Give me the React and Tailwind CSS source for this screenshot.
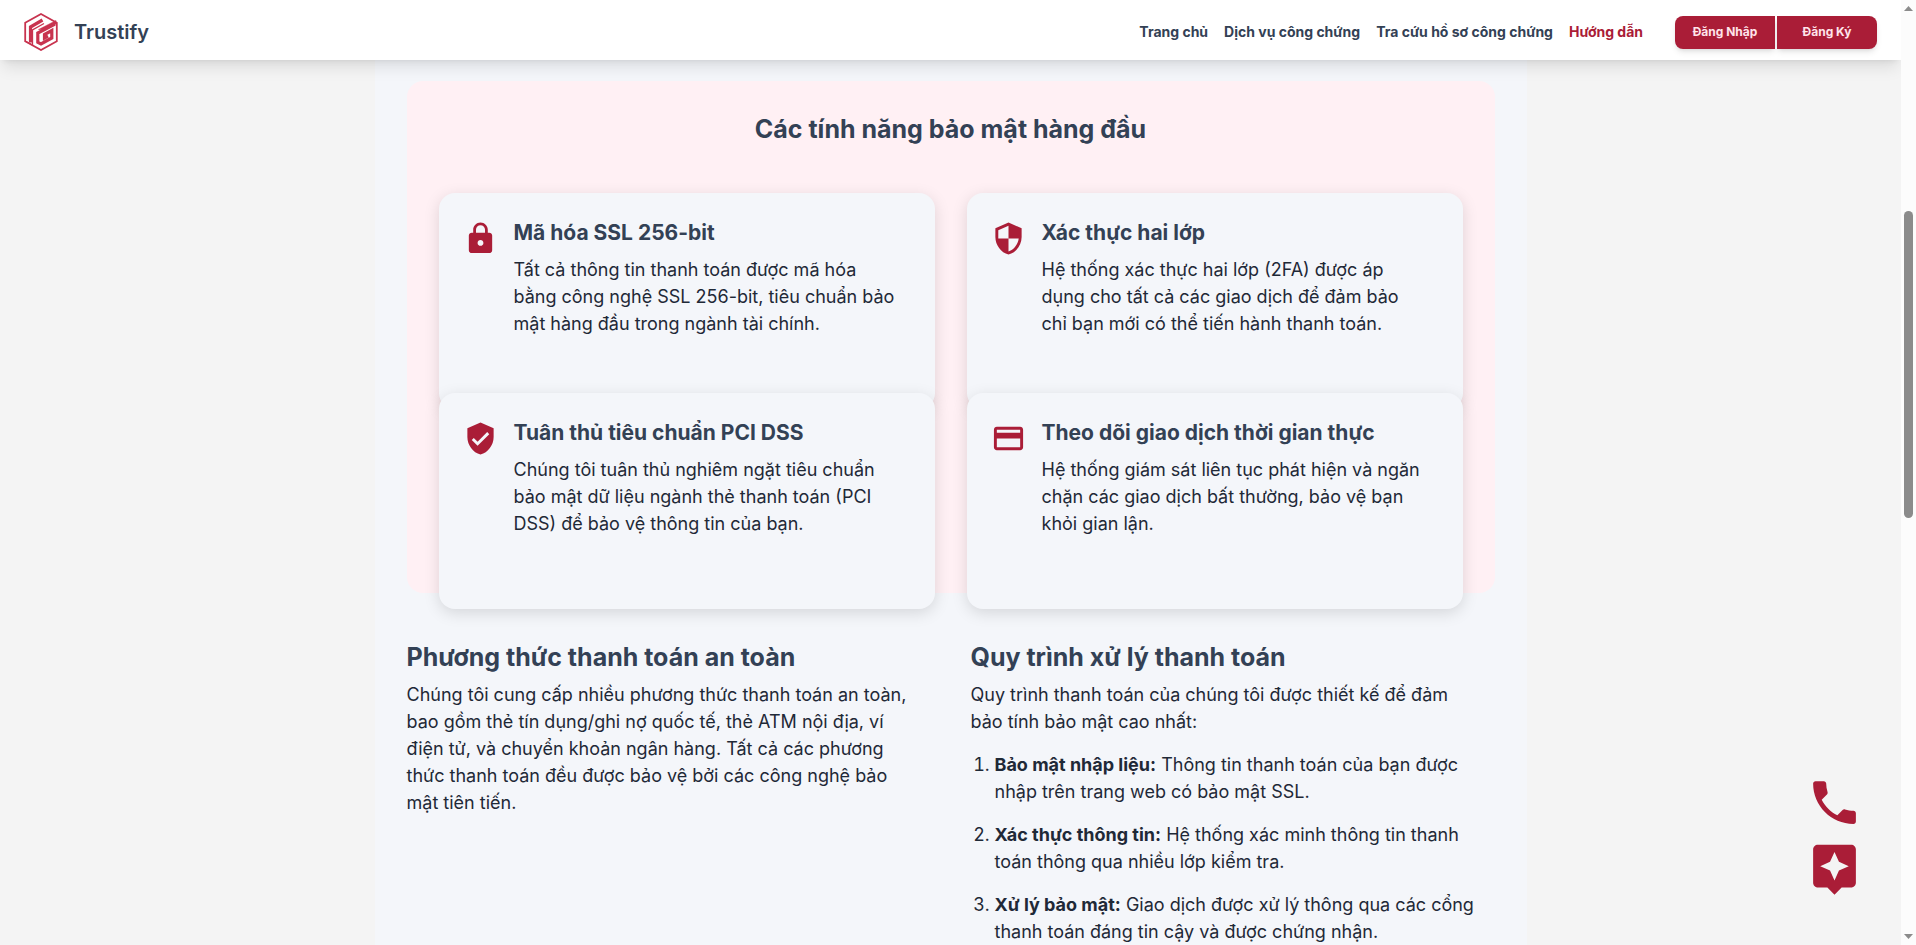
import { Fragment } from "react";
import { MdLock, MdSecurity, MdVerifiedUser, MdPayment, MdPhone, MdAssistant } from "react-icons/md";

const NAV = ["Trang chủ", "Dịch vụ công chứng", "Tra cứu hồ sơ công chứng", "Hướng dẫn"];

const FEATURES = [
  { Icon: MdLock, title: "Mã hóa SSL 256-bit", lines: ["Tất cả thông tin thanh toán được mã hóa", "bằng công nghệ SSL 256-bit, tiêu chuẩn bảo", "mật hàng đầu trong ngành tài chính."] },
  { Icon: MdSecurity, title: "Xác thực hai lớp", lines: ["Hệ thống xác thực hai lớp (2FA) được áp", "dụng cho tất cả các giao dịch để đảm bảo", "chỉ bạn mới có thể tiến hành thanh toán."] },
  { Icon: MdVerifiedUser, title: "Tuân thủ tiêu chuẩn PCI DSS", lines: ["Chúng tôi tuân thủ nghiêm ngặt tiêu chuẩn", "bảo mật dữ liệu ngành thẻ thanh toán (PCI", "DSS) để bảo vệ thông tin của bạn."] },
  { Icon: MdPayment, title: "Theo dõi giao dịch thời gian thực", lines: ["Hệ thống giám sát liên tục phát hiện và ngăn", "chặn các giao dịch bất thường, bảo vệ bạn", "khỏi gian lận."] },
];

const METHODS = [
  "Chúng tôi cung cấp nhiều phương thức thanh toán an toàn,",
  "bao gồm thẻ tín dụng/ghi nợ quốc tế, thẻ ATM nội địa, ví",
  "điện tử, và chuyển khoản ngân hàng. Tất cả các phương",
  "thức thanh toán đều được bảo vệ bởi các công nghệ bảo",
  "mật tiên tiến.",
];

const PROCESS = ["Quy trình thanh toán của chúng tôi được thiết kế để đảm", "bảo tính bảo mật cao nhất:"];

const STEPS = [
  { name: "Bảo mật nhập liệu:", lines: ["Thông tin thanh toán của bạn được", "nhập trên trang web có bảo mật SSL."] },
  { name: "Xác thực thông tin:", lines: ["Hệ thống xác minh thông tin thanh", "toán thông qua nhiều lớp kiểm tra."] },
  { name: "Xử lý bảo mật:", lines: ["Giao dịch được xử lý thông qua các cổng", "thanh toán đáng tin cậy và được chứng nhận."] },
];

function Lines({ lines }) {
  return lines.map((line, i) => (
    <Fragment key={line}>
      {i > 0 && <br />}
      {line}
    </Fragment>
  ));
}

function Logo() {
  return (
    <svg viewBox="0 0 34 38" className="h-[38px] w-[34px] text-[#c8334f]" fill="none" stroke="currentColor" aria-hidden="true">
      <path d="M17 1 32.800 9.800V28.200L17 37 1.200 28.200V9.800Z" strokeWidth="1.800" />
      <path d="M1 28 8.500 32V17L20 10.500" strokeWidth="1.300" />
      <path d="M6.500 29.500V14L18.500 7" strokeWidth="3.200" />
      <path d="M14.500 16.500 32 7.500V11L21 17Z" fill="currentColor" strokeWidth="0.500" />
      <path d="M31 11 13.800 20V29.300L17 31 27.800 25V17.500L20.500 21.500V25L24 23" strokeWidth="3.200" />
    </svg>
  );
}

function Header() {
  return (
    <header className="z-10 flex h-[60px] shrink-0 items-center justify-between bg-white px-6 pt-1 shadow-lg">
      <a href="#" className="flex items-center gap-4 text-xl font-semibold text-[#334155]">
        <Logo />
        Trustify
      </a>
      <div className="flex items-center gap-8">
        <nav className="flex gap-4 text-sm font-bold text-[#334155]">
          {NAV.map((item, i) => (
            <a key={item} href="#" className={i === 3 ? "text-[#aa1d37]" : ""}>{item}</a>
          ))}
        </nav>
        <div className="flex gap-0.5 text-xs font-bold text-[#ffe4ea]">
          <button type="button" className="h-[33px] w-[100px] rounded-l-lg bg-[#aa1d37] shadow-md">Đăng Nhập</button>
          <button type="button" className="h-[33px] w-[100px] rounded-r-lg bg-[#aa1d37] shadow-md">Đăng Ký</button>
        </div>
      </div>
    </header>
  );
}

function FeatureCard({ Icon, title, lines }) {
  return (
    <article className="flex h-[216px] gap-4 rounded-2xl bg-[#f4f6fa] p-6 shadow-[0_4px_16px_rgba(0,0,0,0.13)]">
      <Icon className="mt-1 size-[35px] shrink-0 text-[#aa1d37]" />
      <div className="min-w-0 pt-px">
        <h3 className="mb-2 text-[21px] leading-[30px] font-bold text-[#334155]">{title}</h3>
        <p><Lines lines={lines} /></p>
      </div>
    </article>
  );
}

function Scrollbar() {
  return (
    <div className="flex w-[15px] shrink-0 flex-col items-center bg-[#fcfcfc] text-[#8b8b8b]" aria-hidden="true">
      <svg viewBox="0 0 15 15" className="size-[15px]" fill="currentColor"><path d="M3 11 7.500 6 12 11Z" /></svg>
      <div className="h-[196px]" />
      <div className="h-[307px] w-[9px] rounded-full bg-[#8b8b8b]" />
      <div className="flex-1" />
      <svg viewBox="0 0 15 15" className="size-[15px]" fill="currentColor"><path d="M3 4 7.500 9 12 4Z" /></svg>
    </div>
  );
}

export default function App() {
  return (
    <div className="flex h-screen bg-[#f4f4f4] font-['Inter','Noto_Sans',sans-serif] text-lg leading-[27px] text-[#1f2937]">
      <div className="relative flex min-w-0 flex-1 flex-col overflow-hidden">
        <Header />
        <main className="mx-auto min-h-0 w-full max-w-6xl flex-1 bg-[#f4f6fa] px-8 pt-[21px]">
          <section className="mb-12 h-[512px] rounded-2xl bg-[#fff0f4] p-8">
            <h2 className="mb-12 text-center text-[25px] leading-8 font-bold text-[#334155]">Các tính năng bảo mật hàng đầu</h2>
            <div className="grid auto-rows-[200px] grid-cols-2 gap-x-8">
              {FEATURES.map((f) => <FeatureCard key={f.title} {...f} />)}
            </div>
          </section>
          <div className="grid grid-cols-2 gap-10">
            <section>
              <h2 className="mb-2 text-[25px] leading-8 font-bold text-[#334155]">Phương thức thanh toán an toàn</h2>
              <p><Lines lines={METHODS} /></p>
            </section>
            <section>
              <h2 className="mb-2 text-[25px] leading-8 font-bold text-[#334155]">Quy trình xử lý thanh toán</h2>
              <p className="mb-4"><Lines lines={PROCESS} /></p>
              <ol className="flex list-decimal flex-col gap-4 pl-6">
                {STEPS.map((s) => (
                  <li key={s.name}><strong>{s.name}</strong> <Lines lines={s.lines} /></li>
                ))}
              </ol>
            </section>
          </div>
        </main>
        <div className="absolute right-[38px] bottom-12 z-10 flex flex-col gap-[9px] text-[#aa1d37]">
          <a href="#" aria-label="Gọi điện"><MdPhone className="size-[57px]" /></a>
          <a href="#" aria-label="Trợ lý"><MdAssistant className="size-[57px]" /></a>
        </div>
      </div>
      <Scrollbar />
    </div>
  );
}
